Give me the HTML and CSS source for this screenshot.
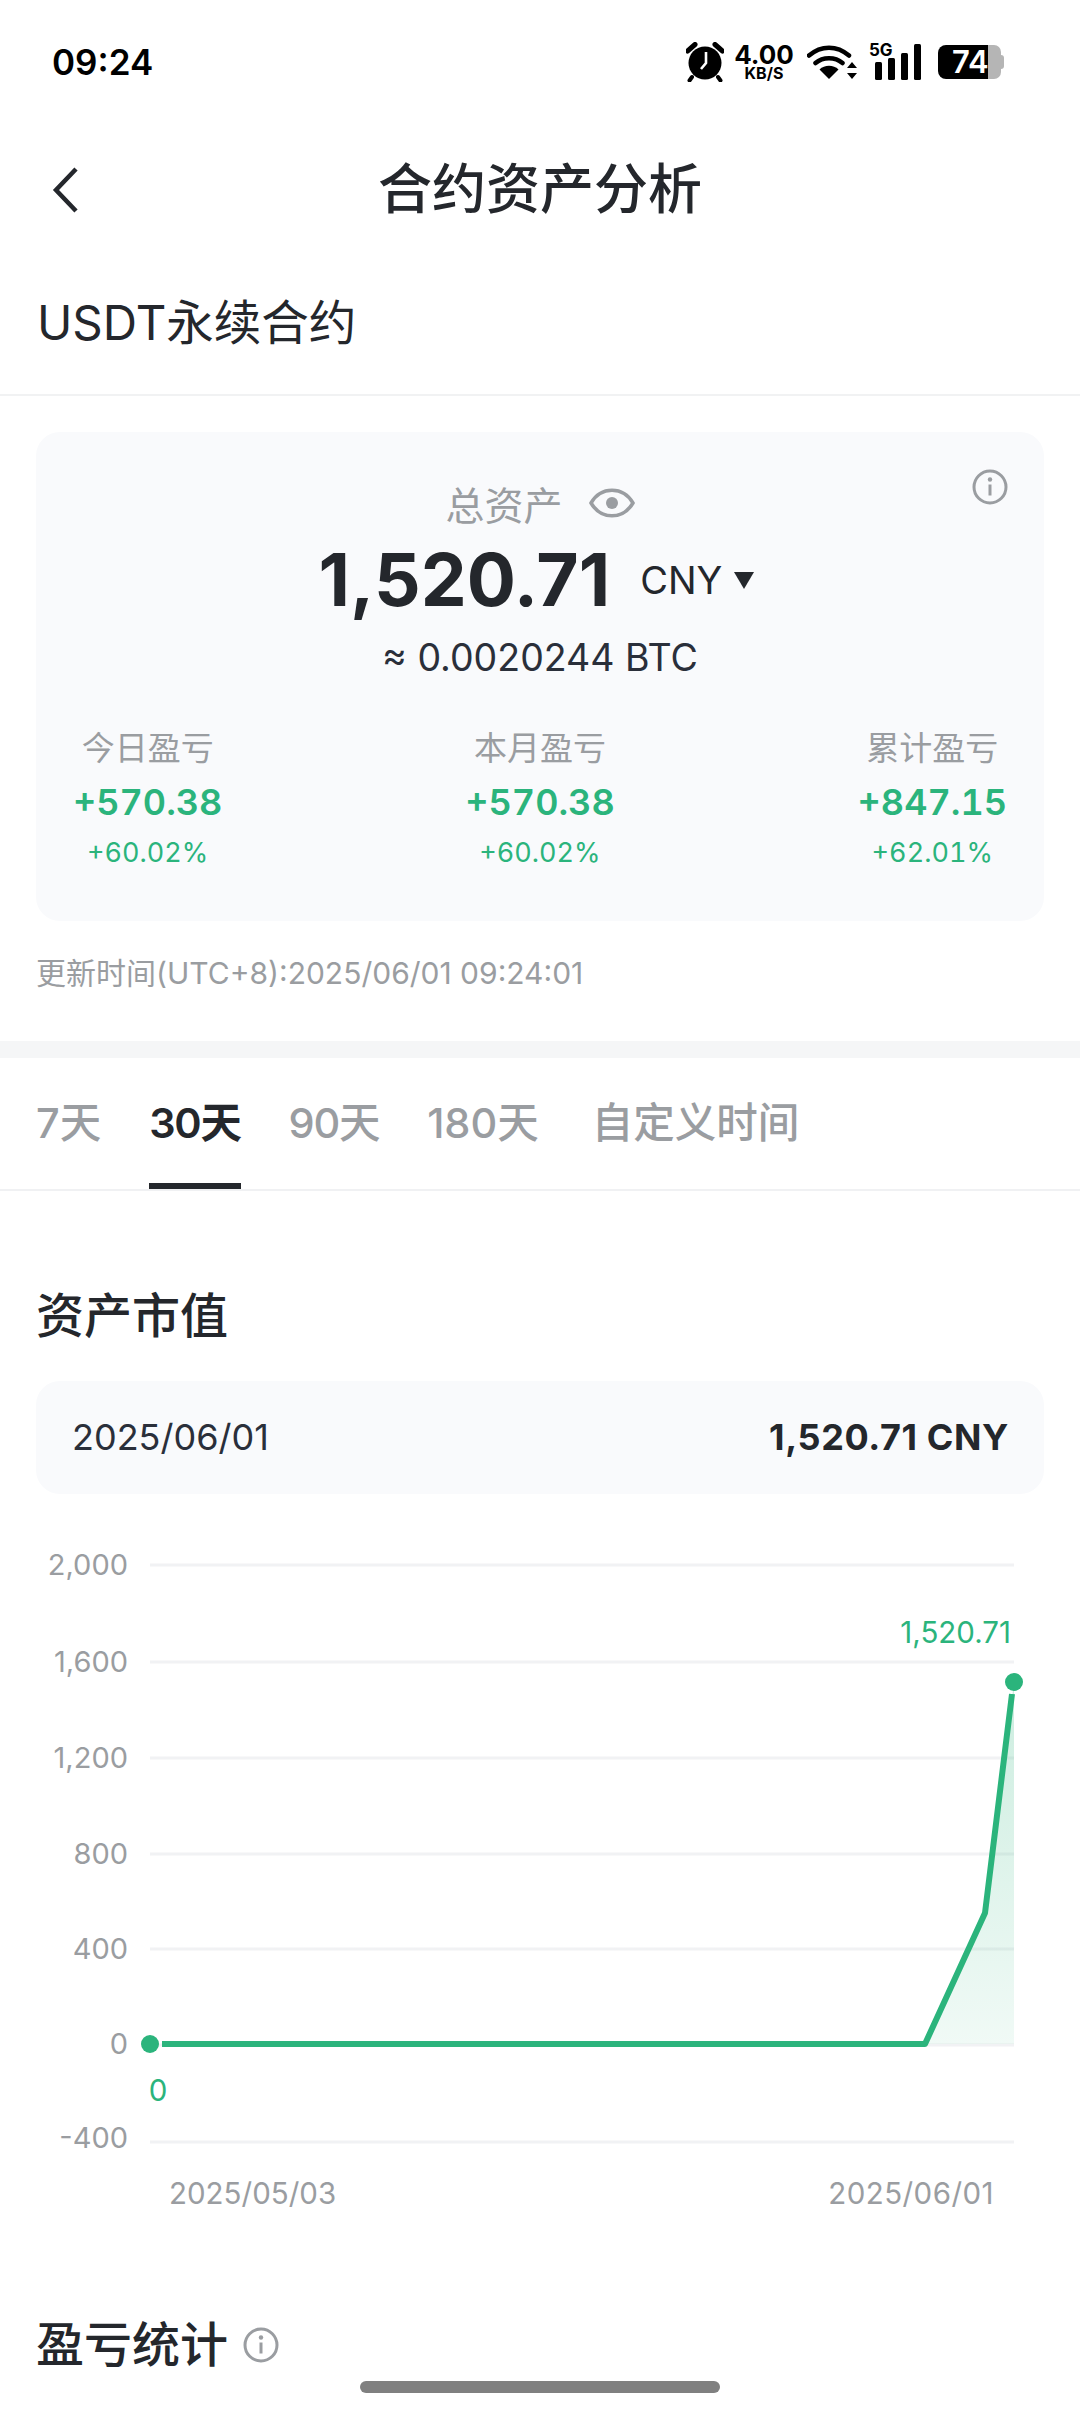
FILE: index.html
```html
<!DOCTYPE html>
<html lang="zh-CN">
<head>
<meta charset="utf-8">
<title>合约资产分析</title>
<link rel="stylesheet" href="styles.css">
</head>
<body>
<div class="page">
  <div class="status">
    <span class="time">09:24</span>
    <div class="status-icons">
      <svg class="ic-alarm" width="38" height="40" viewBox="0 0 38 40"><circle cx="19" cy="21" r="16.5" fill="#000"/><path d="M1.5 9 9 2.500M36.500 9 29 2.500" stroke="#000" stroke-width="5" stroke-linecap="round"/><path d="M6 35 3.500 38.500M32 35l2.500 3.500" stroke="#000" stroke-width="4" stroke-linecap="round"/><path d="M20 10v11l-5 6" fill="none" stroke="#fff" stroke-width="2.600"/></svg>
      <div class="speed"><span class="speed-num">4.00</span><span class="speed-unit">KB/S</span></div>
      <svg class="ic-wifi" width="50" height="36" viewBox="0 0 50 36"><path d="M2 11.500C14 1 30 1 42 11.500M8.500 19C16 12.500 28 12.500 35.500 19" fill="none" stroke="#000" stroke-width="4.500" stroke-linecap="round"/><path d="M22 35 12.500 25.500C17.500 20.500 26.500 20.500 31.500 25.500Z" fill="#000"/><path d="M45 18 50 24H40ZM45 35 40 29H50Z" fill="#000"/></svg>
      <div class="signal">
        <span class="net">5G</span>
        <svg width="46" height="36" viewBox="0 0 46 36"><rect x="0" y="18" width="7" height="18" rx="1.500"/><rect x="13" y="14" width="7" height="22" rx="1.500"/><rect x="26" y="9" width="7" height="27" rx="1.500"/><rect x="39" y="0" width="7" height="36" rx="1.500"/></svg>
      </div>
      <div class="battery"><span class="batt-fill"></span><span class="batt-rest"></span><span class="batt-tip"></span><span class="batt-num">74</span></div>
    </div>
  </div>

  <header class="nav">
    <svg class="back" width="30" height="46" viewBox="0 0 30 46"><path d="M26 2 6 23l20 21" fill="none" stroke="#24272c" stroke-width="4.500"/></svg>
    <h1 class="nav-title">合约资产分析</h1>
  </header>

  <div class="sub-title">USDT永续合约</div>

  <section class="summary">
    <div class="card">
      <svg class="card-info" width="36" height="36" viewBox="0 0 36 36"><circle cx="18" cy="18" r="16" fill="none" stroke="#9a9da1" stroke-width="3"/><circle cx="18" cy="10.500" r="2.200" fill="#9a9da1"/><path d="M18 15.500v11" stroke="#9a9da1" stroke-width="3"/></svg>
      <div class="total-label">
        <span>总资产</span>
        <svg width="46" height="32" viewBox="0 0 46 32"><path d="M2 16C12 -1 34 -1 44 16C34 33 12 33 2 16Z" fill="none" stroke="#9a9da1" stroke-width="3.500"/><circle cx="23" cy="16" r="6" fill="#9a9da1"/></svg>
      </div>
      <div class="total-row">
        <span class="total-num">1,520.71</span>
        <span class="total-cur">CNY</span>
        <svg width="20" height="17" viewBox="0 0 20 17"><path d="M0 0h20L10 17Z" fill="#24272c"/></svg>
      </div>
      <div class="total-btc">≈ 0.0020244 BTC</div>
      <div class="stats">
        <div class="stat">
          <div class="stat-label">今日盈亏</div>
          <div class="stat-val">+570.38</div>
          <div class="stat-pct">+60.02%</div>
        </div>
        <div class="stat">
          <div class="stat-label">本月盈亏</div>
          <div class="stat-val">+570.38</div>
          <div class="stat-pct">+60.02%</div>
        </div>
        <div class="stat">
          <div class="stat-label">累计盈亏</div>
          <div class="stat-val">+847.15</div>
          <div class="stat-pct">+62.01%</div>
        </div>
      </div>
    </div>
    <div class="updated">更新时间(UTC+8):2025/06/01 09:24:01</div>
  </section>

  <div class="band"></div>

  <nav class="tabs">
    <span class="tab">7天</span>
    <span class="tab tab-narrow active">30天</span>
    <span class="tab tab-narrow">90天</span>
    <span class="tab">180天</span>
    <span class="tab tab-last">自定义时间</span>
  </nav>

  <h2 class="section-title">资产市值</h2>
  <div class="pill"><span class="pill-date">2025/06/01</span><span class="pill-val">1,520.71 CNY</span></div>

  <svg class="chart" width="1080" height="740" viewBox="0 1510 1080 740">
    <defs>
      <linearGradient id="area" x1="0" y1="0" x2="0" y2="1">
        <stop offset="0" stop-color="#2bb47c" stop-opacity=".24"/>
        <stop offset="1" stop-color="#2bb47c" stop-opacity=".07"/>
      </linearGradient>
    </defs>
    <g class="grid">
      <path d="M150 1564H1014M150 1661H1014M150 1757H1014M150 1853H1014M150 1948H1014M150 2044H1014M150 2141H1014"/>
    </g>
    <g class="y-labels">
      <text x="128" y="1574">2,000</text>
      <text x="128" y="1671">1,600</text>
      <text x="128" y="1767">1,200</text>
      <text x="128" y="1863">800</text>
      <text x="128" y="1958">400</text>
      <text x="128" y="2053">0</text>
      <text x="128" y="2147">-400</text>
    </g>
    <path d="M925 2043 985 1912 1014 1681V2043Z" fill="url(#area)"/>
    <path class="line" d="M162 2043H925L985 1912 1012 1693"/>
    <circle class="dot" cx="1014" cy="1681" r="9"/>
    <circle class="dot" cx="150" cy="2043" r="9"/>
    <text class="val-label" x="1011" y="1642" text-anchor="end">1,520.71</text>
    <text class="val-label" x="158" y="2100" text-anchor="middle">0</text>
    <text class="date-label" x="169" y="2203">2025/05/03</text>
    <text class="date-label date-wide" x="994" y="2203" text-anchor="end">2025/06/01</text>
  </svg>

  <div class="pnl-title">
    <h2 class="pnl-text">盈亏统计</h2>
    <svg width="36" height="36" viewBox="0 0 36 36"><circle cx="18" cy="18" r="16" fill="none" stroke="#9a9da1" stroke-width="3"/><circle cx="18" cy="10.500" r="2.200" fill="#9a9da1"/><path d="M18 15.500v11" stroke="#9a9da1" stroke-width="3"/></svg>
  </div>

  <div class="home-bar"></div>
</div>
</body>
</html>
```
FILE: styles.css
```css
* { box-sizing: border-box; }
html, body { margin: 0; padding: 0; background: #fff; }
body { font-family: Inter, "Noto Sans CJK SC", sans-serif; color: #24272c; }
h1, h2 { margin: 0; font-weight: 500; }
.page { position: relative; width: 1080px; height: 2414px; overflow: hidden; background: #fff; }

.status { height: 124px; display: flex; align-items: center; justify-content: space-between; padding: 0 76px 0 52px; color: #000; }
.time { font-size: 35px; font-weight: 600; line-height: 40px; }
.status-icons { display: flex; align-items: center; gap: 13px; }
.ic-alarm { margin-right: -3px; }
.speed { display: flex; flex-direction: column; align-items: center; width: 60px; font-weight: 700; }
.speed-num { font-size: 26px; line-height: 20px; }
.speed-unit { font-size: 16px; line-height: 13px; margin-top: 2px; }
.signal { position: relative; width: 52px; height: 36px; margin-left: -1px; }
.signal svg { position: absolute; left: 6px; top: 0; fill: #000; }
.net { position: absolute; left: 0; top: -3px; font-size: 17px; line-height: 18px; font-weight: 700; background: #fff; padding-right: 2px; }
.battery { position: relative; display: flex; align-items: center; height: 34px; width: 66px; margin-left: 4px; }
.batt-fill { width: 50px; height: 34px; background: #000; border-radius: 8px 0 0 8px; }
.batt-rest { width: 13px; height: 34px; background: #b5b5b5; border-radius: 0 7px 7px 0; }
.batt-tip { width: 3px; height: 14px; background: #b5b5b5; border-radius: 0 3px 3px 0; }
.batt-num { position: absolute; left: 14px; top: 0; color: #fff; font-size: 31px; font-weight: 600; line-height: 34px; }

.nav { position: relative; height: 126px; display: flex; align-items: center; justify-content: center; padding-top: 5px; }
.back { position: absolute; left: 50px; top: 43px; }
.nav-title { font-size: 54px; line-height: 70px; font-weight: 500; }

.sub-title { height: 146px; padding-top: 43px; font-size: 47.500px; line-height: 60px; padding-left: 37px; border-bottom: 2px solid #f1f2f3; }

.summary { padding: 36px 36px 0; height: 645px; }
.card { position: relative; height: 489px; background: #f9fafc; border-radius: 24px; padding: 48px 37px 0; }
.card-info { position: absolute; right: 36px; top: 37px; }
.total-label { display: flex; align-items: center; justify-content: center; gap: 26px; height: 46px; font-size: 39px; color: #9a9da1; }
.total-row { display: flex; align-items: center; justify-content: center; height: 80px; margin-top: 14px; padding-right: 7px; }
.total-num { font-size: 73px; font-weight: 700; line-height: 80px; }
.total-cur { font-size: 38px; margin-left: 30px; margin-right: 12px; }
.total-btc { height: 46px; margin-top: 15px; text-align: center; font-size: 37.500px; line-height: 46px; color: #2a2f3a; }
.stats { display: flex; justify-content: space-between; margin-top: 47px; }
.stat { display: flex; flex-direction: column; align-items: center; }
.stat-label { height: 40px; font-size: 33px; line-height: 40px; color: #9a9da1; }
.stat-val { height: 48px; margin-top: 10px; font-size: 36px; font-weight: 600; line-height: 48px; color: #2bb47c; font-feature-settings: "tnum"; }
.stat-pct { height: 40px; margin-top: 7px; font-size: 27px; line-height: 40px; color: #2bb47c; font-feature-settings: "tnum"; }
.updated { margin-top: 32px; height: 40px; font-size: 30px; line-height: 40px; color: #9a9da1; }

.band { height: 17px; background: #f5f6f7; }

.tabs { display: flex; gap: 48px; height: 133px; padding: 0 36px; border-bottom: 2px solid #f0f1f3; }
.tab { position: relative; height: 131px; font-size: 41.500px; font-weight: 500; line-height: 130px; color: #9a9da1; }
.tab-narrow { letter-spacing: -1.300px; }
.tab-last { margin-left: 5px; }
.tab.active { color: #24272c; font-weight: 600; }
.tab.active::after { content: ""; position: absolute; left: 0; right: 0; bottom: 0; height: 6px; background: #24272c; }

.section-title { margin-top: 92px; padding-left: 36px; font-size: 48px; line-height: 66px; }
.pill { display: flex; align-items: center; justify-content: space-between; height: 113px; margin: 32px 36px 0; padding: 0 35px 2px 36px; background: #f9fafc; border-radius: 24px; font-size: 36px; }
.pill-date { color: #2a2f3a; }
.pill-val { font-weight: 700; letter-spacing: .6px; }

.chart { display: block; margin-top: 17px; }
.grid path { fill: none; stroke: #f1f2f4; stroke-width: 3; }
.y-labels text { font-size: 29px; fill: #9a9da1; text-anchor: end; }
.line { fill: none; stroke: #2bb47c; stroke-width: 6; stroke-linejoin: round; }
.dot { fill: #2bb47c; }
.val-label { font-size: 29.500px; fill: #2bb47c; }
.date-label { font-size: 29.500px; fill: #9a9da1; }
.date-wide { letter-spacing: .45px; }

.pnl-title { display: flex; align-items: center; gap: 15px; margin-top: 64px; padding-left: 36px; height: 60px; }
.pnl-text { font-size: 48px; line-height: 60px; }

.home-bar { position: absolute; left: 360px; bottom: 21px; width: 360px; height: 12px; background: #808080; border-radius: 6px; }
```
